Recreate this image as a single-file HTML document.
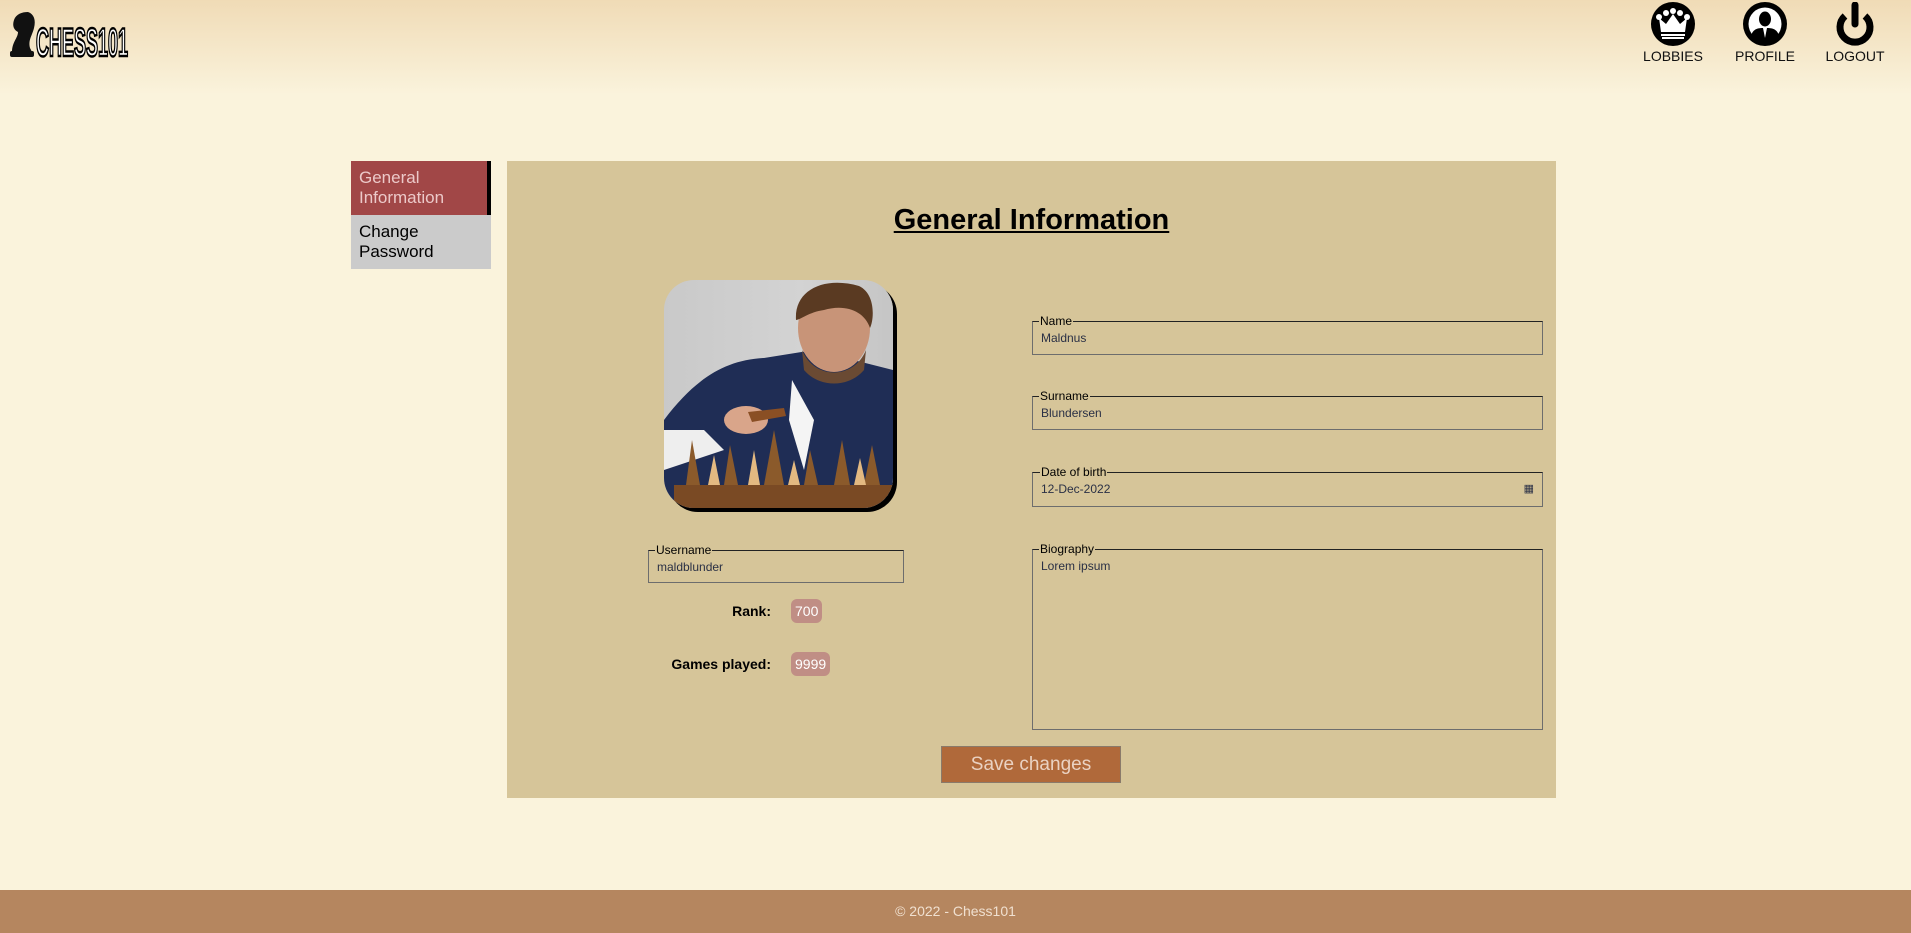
<!DOCTYPE html>
<html><head><meta charset="utf-8"><style>
*{box-sizing:border-box;margin:0;padding:0}
body{width:1911px;height:933px;position:relative;overflow:hidden;background:#faf3dc;font-family:"Liberation Sans",Arial,sans-serif}
.hdr{position:absolute;left:0;top:0;width:1911px;height:95px;background:linear-gradient(#f0dbb6,#faf3dc)}
.abs{position:absolute}
.nav{position:absolute;top:2px;width:80px;text-align:center;font-size:14px;color:#111}
.nav svg{display:block;margin:0 auto 2px}
.side{position:absolute;left:351px;width:140px;height:54px;font-size:17px;line-height:20px;padding:7px 8px}
.panel{position:absolute;left:507px;top:161px;width:1049px;height:637px;background:#d6c599}
fieldset{position:absolute;border:1px solid #6d6d6d;border-top-color:#222;padding:0 8px}
legend{font-size:12px;color:#000;padding:0 1px;margin-left:-2px;line-height:10px}
fieldset div{font-size:12px;color:#2a3045;padding-top:5px}
.lbl{position:absolute;font-size:14px;font-weight:bold;text-align:right;width:200px}
.badge{position:absolute;background:#c08e85;color:#fff;font-size:14px;border-radius:6px;padding:4px 4px}
</style></head><body>
<div class="hdr"></div>
<svg class="abs" style="left:8px;top:8px" width="130" height="52" viewBox="0 0 130 52">
<path d="M4 44 C4 34 10 30 10 24 C6 22 4 18 6 12 C8 6 14 4 20 4 C26 6 28 12 26 20 C24 28 20 32 22 40 L24 44 Z" fill="#111"/>
<rect x="2" y="43" width="24" height="6" rx="2" fill="#111"/>
<text x="28" y="48" font-family="Liberation Sans" font-weight="bold" font-size="40" fill="#fff" stroke="#000" stroke-width="2.5" textLength="92" lengthAdjust="spacingAndGlyphs">CHESS101</text>
</svg>
<div class="nav" style="left:1633px">
<svg width="44" height="44" viewBox="0 0 44 44"><circle cx="22" cy="22" r="22" fill="#000"/><path d="M10 30 L8 16 L15 22 L22 12 L29 22 L36 16 L34 30 Z" fill="#fff"/><circle cx="8" cy="15" r="3" fill="#fff"/><circle cx="15" cy="11" r="3" fill="#fff"/><circle cx="22" cy="9" r="3" fill="#fff"/><circle cx="29" cy="11" r="3" fill="#fff"/><circle cx="36" cy="15" r="3" fill="#fff"/><rect x="10" y="32" width="24" height="2" fill="#fff"/><rect x="11" y="35" width="22" height="2" fill="#fff"/></svg>LOBBIES</div>
<div class="nav" style="left:1725px">
<svg width="44" height="44" viewBox="0 0 44 44"><circle cx="22" cy="22" r="22" fill="#000"/><circle cx="22" cy="22" r="16.5" fill="#fff"/><ellipse cx="22" cy="17" rx="6" ry="7.5" fill="#000"/><path d="M8 34 C10 26 16 26 22 26 C28 26 34 26 36 34 C32 38 27 39 22 39 C17 39 12 38 8 34 Z" fill="#000"/><path d="M20 26 L22 36 L24 26 Z" fill="#fff"/></svg>PROFILE</div>
<div class="nav" style="left:1815px">
<svg width="44" height="44" viewBox="0 0 44 44"><path d="M12 14 A15 15 0 1 0 32 14" fill="none" stroke="#000" stroke-width="7"/><line x1="22" y1="3" x2="22" y2="22" stroke="#000" stroke-width="7" stroke-linecap="round"/></svg>LOGOUT</div>

<div class="side" style="top:161px;background:#a14747;color:#ecc9c9;border-right:4px solid #000">General Information</div>
<div class="side" style="top:215px;background:#cbcbcb;color:#000">Change Password</div>

<div class="panel"></div>
<div class="abs" style="left:507px;width:1049px;top:204px;text-align:center;font-size:29px;font-weight:bold;text-decoration:underline;color:#000">General Information</div>

<div class="abs" style="left:664px;top:280px;width:229px;height:228px;border-radius:30px;overflow:hidden;box-shadow:4px 4px 0 #000;background:linear-gradient(90deg,#c9c9c9 0,#d3d3d3 60%,#c5c5c5)">
<svg width="229" height="228" viewBox="0 0 229 228">
<path d="M0 140 C30 100 60 80 100 78 L150 70 L229 90 L229 228 L0 228Z" fill="#1f2d55"/>
<path d="M0 150 L40 150 L60 170 L0 190Z" fill="#eee"/>
<path d="M128 100 L150 140 L140 190 L125 140Z" fill="#f4f4f4"/>
<ellipse cx="170" cy="48" rx="36" ry="44" fill="#c89478"/>
<path d="M132 40 C130 10 160 -4 195 6 C212 14 210 40 206 48 C200 30 180 24 160 30 C145 32 136 40 132 40Z" fill="#5a3a22"/>
<path d="M138 70 C150 100 190 100 202 70 L200 90 C185 108 155 108 140 90Z" fill="#6a4a33"/>
<ellipse cx="82" cy="140" rx="22" ry="14" fill="#d9a58a"/>
<path d="M84 132 L120 128 L122 136 L88 142Z" fill="#8a4f24"/>
<rect x="10" y="205" width="219" height="23" fill="#7a4a24"/>
<g fill="#8b5a2b"><path d="M22 205 L28 160 L36 205Z"/><path d="M60 205 L66 165 L74 205Z"/><path d="M100 205 L110 150 L120 205Z"/><path d="M140 205 L146 170 L154 205Z"/><path d="M170 205 L178 160 L186 205Z"/><path d="M200 205 L208 165 L216 205Z"/></g>
<g fill="#e3b981"><path d="M44 205 L50 175 L56 205Z"/><path d="M84 205 L90 170 L96 205Z"/><path d="M124 205 L130 180 L136 205Z"/><path d="M190 205 L196 178 L202 205Z"/></g>
</svg></div>

<fieldset style="left:648px;top:545px;width:256px;height:38px"><legend>Username</legend><div>maldblunder</div></fieldset>
<div class="lbl" style="left:571px;top:603px">Rank:</div>
<div class="badge" style="left:791px;top:599px">700</div>
<div class="lbl" style="left:571px;top:656px">Games played:</div>
<div class="badge" style="left:791px;top:652px">9999</div>

<fieldset style="left:1032px;top:316px;width:511px;height:39px"><legend>Name</legend><div>Maldnus</div></fieldset>
<fieldset style="left:1032px;top:391px;width:511px;height:39px"><legend>Surname</legend><div>Blundersen</div></fieldset>
<fieldset style="left:1032px;top:467px;width:511px;height:40px"><legend style="margin-left:-1px">Date of birth</legend><div>12-Dec-2022<span style="float:right;font-size:11px">&#9638;</span></div></fieldset>
<fieldset style="left:1032px;top:544px;width:511px;height:186px"><legend>Biography</legend><div>Lorem ipsum</div></fieldset>

<div class="abs" style="left:941px;top:746px;width:180px;height:37px;background:#b0693a;border:1px solid #8a7a6a;color:#ead2c2;font-size:19px;text-align:center;line-height:36px">Save changes</div>

<div class="abs" style="left:0;top:890px;width:1911px;height:43px;background:#b5865f;color:#f0e0d0;font-size:14px;text-align:center;line-height:43px">© 2022 - Chess101</div>
</body></html>
